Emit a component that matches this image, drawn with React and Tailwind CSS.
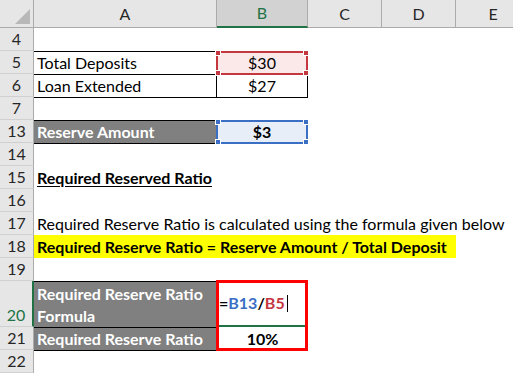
const FONT = { fontFamily: "Lato, 'Liberation Sans', sans-serif" };

const RowHead = ({ n, active, tall }) => (
  <div
    className={`w-[34px] shrink-0 flex items-end justify-center bg-[#e6e6e6] border-b border-b-[#d0d0d0] ${
      active
        ? "border-r-2 border-r-[#217346] text-[#217346] bg-[#dcdcdc]"
        : "border-r border-r-[#ababab] text-[#262626]"
    } ${tall ? "h-[46px]" : "h-[23px]"}`}
  >
    <span className="leading-[22px]">{n}</span>
  </div>
);

const Corners = ({ color }) => (
  <>
    <span className={`absolute -left-[3px] -top-[3px] w-[6px] h-[6px] border border-white ${color}`} />
    <span className={`absolute -right-[3px] -top-[3px] w-[6px] h-[6px] border border-white ${color}`} />
    <span className={`absolute -left-[3px] -bottom-[3px] w-[6px] h-[6px] border border-white ${color}`} />
    <span className={`absolute -right-[3px] -bottom-[3px] w-[6px] h-[6px] border border-white ${color}`} />
  </>
);

const Empty = ({ n }) => (
  <div className="flex h-[23px]">
    <RowHead n={n} />
    <div className="flex-1 bg-white" />
  </div>
);

export default function App() {
  return (
    <div
      className="w-[513px] h-[373px] overflow-hidden bg-white text-[16px] text-black"
      style={FONT}
    >
      {/* column headers */}
      <div className="flex h-[28px] w-[530px] bg-[#e6e6e6] text-[#262626]">
        <div className="w-[34px] shrink-0 border-r border-b border-[#ababab] flex items-end justify-end pr-[3px] pb-[3px]">
          <svg width="15" height="15" viewBox="0 0 15 15">
            <polygon points="15,0 15,15 0,15" fill="#b8b8b8" />
          </svg>
        </div>
        <div className="w-[183px] shrink-0 border-r border-b border-[#ababab] flex items-center justify-center">
          A
        </div>
        <div className="w-[91px] shrink-0 border-r border-r-[#ababab] border-b-2 border-b-[#217346] bg-[#d2d2d2] text-[#217346] flex items-center justify-center">
          B
        </div>
        <div className="w-[74px] shrink-0 border-r border-b border-[#ababab] flex items-center justify-center">
          C
        </div>
        <div className="w-[74px] shrink-0 border-r border-b border-[#ababab] flex items-center justify-center">
          D
        </div>
        <div className="w-[74px] shrink-0 border-b border-[#ababab] flex items-center justify-center">
          E
        </div>
      </div>

      <Empty n="4" />

      {/* row 5 */}
      <div className="flex h-[23px]">
        <RowHead n="5" />
        <div className="w-[183px] shrink-0 border-t border-r border-black pl-[3px] flex items-end leading-[22px]">
          Total Deposits
        </div>
        <div className="w-[91px] shrink-0 border-t border-r border-black relative">
          <div className="absolute -left-[1px] -top-[1px] w-[92px] h-[24px] border-2 border-[#c4373f] bg-[#fbe8e9] flex items-end justify-center leading-[20px]">
            $30
            <Corners color="bg-[#c4373f]" />
          </div>
        </div>
        <div className="flex-1" />
      </div>

      {/* row 6 */}
      <div className="flex h-[23px]">
        <RowHead n="6" />
        <div className="w-[183px] shrink-0 border-t border-r border-black pl-[3px] flex items-end leading-[22px]">
          Loan Extended
        </div>
        <div className="w-[91px] shrink-0 border-t border-r border-black flex items-end justify-center leading-[22px]">
          $27
        </div>
        <div className="flex-1" />
      </div>

      {/* row 7 */}
      <div className="flex h-[23px]">
        <RowHead n="7" />
        <div className="w-[274px] shrink-0 border-t border-black" />
        <div className="flex-1" />
      </div>

      {/* row 13 */}
      <div className="flex h-[23px]">
        <RowHead n="13" />
        <div className="w-[183px] shrink-0 border-t border-r border-black bg-[#808080] text-white font-bold pl-[3px] flex items-end leading-[22px]">
          Reserve Amount
        </div>
        <div className="w-[91px] shrink-0 border-t border-black relative">
          <div className="absolute -left-[1px] -top-[1px] w-[92px] h-[24px] border-2 border-[#3a6fc4] bg-[#e8eef8] flex items-end justify-center leading-[20px] font-bold">
            $3
            <Corners color="bg-[#3a6fc4]" />
          </div>
        </div>
        <div className="flex-1" />
      </div>

      {/* row 14 */}
      <div className="flex h-[23px]">
        <RowHead n="14" />
        <div className="w-[274px] shrink-0 border-t border-black" />
        <div className="flex-1" />
      </div>

      {/* row 15 */}
      <div className="flex h-[23px]">
        <RowHead n="15" />
        <div className="flex-1 pl-[3px] flex items-end leading-[22px] font-bold underline underline-offset-[2px]">
          Required Reserved Ratio
        </div>
      </div>

      <Empty n="16" />

      {/* row 17 */}
      <div className="flex h-[23px]">
        <RowHead n="17" />
        <div className="flex-1 pl-[3px] flex items-end leading-[22px] whitespace-nowrap">
          Required Reserve Ratio is calculated using the formula given below
        </div>
      </div>

      {/* row 18 */}
      <div className="flex h-[23px]">
        <RowHead n="18" />
        <div className="w-[422px] shrink-0 bg-[#ffff00] pl-[3px] flex items-end leading-[22px] font-bold whitespace-nowrap">
          Required Reserve Ratio = Reserve Amount / Total Deposit
        </div>
        <div className="flex-1" />
      </div>

      <Empty n="19" />

      {/* row 20 */}
      <div className="flex h-[46px]">
        <RowHead n="20" active tall />
        <div className="w-[183px] shrink-0 border-t border-r border-black bg-[#808080] text-white font-bold pl-[3px] flex flex-col justify-end leading-[22px]">
          <span>Required Reserve Ratio</span>
          <span>Formula</span>
        </div>
        <div className="w-[91px] shrink-0 border-t border-black relative">
          <div className="pl-[2px] pt-[10px] leading-[22px] font-bold flex items-center">
            <span>=</span>
            <span className="text-[#3a6fc4]">B13</span>
            <span>/</span>
            <span className="text-[#c4373f]">B5</span>
            <span className="ml-[2px] w-[1px] h-[17px] bg-black" />
          </div>
          <span className="absolute left-[2px] right-[2px] bottom-0 h-[2px] bg-[#217346]" />
          <div className="absolute -left-[1px] -top-[2px] w-[92px] h-[71px] border-[3px] border-[#ff0000] pointer-events-none" />
        </div>
        <div className="flex-1" />
      </div>

      {/* row 21 */}
      <div className="flex h-[23px]">
        <RowHead n="21" />
        <div className="w-[183px] shrink-0 border-t border-r border-black bg-[#808080] text-white font-bold pl-[3px] flex items-end leading-[22px]">
          Required Reserve Ratio
        </div>
        <div className="w-[91px] shrink-0 flex items-end justify-center leading-[22px] font-bold">
          10%
        </div>
        <div className="flex-1" />
      </div>

      {/* row 22 */}
      <div className="flex h-[23px]">
        <RowHead n="22" />
        <div className="w-[183px] shrink-0 border-t border-black" />
        <div className="flex-1" />
      </div>
    </div>
  );
}
